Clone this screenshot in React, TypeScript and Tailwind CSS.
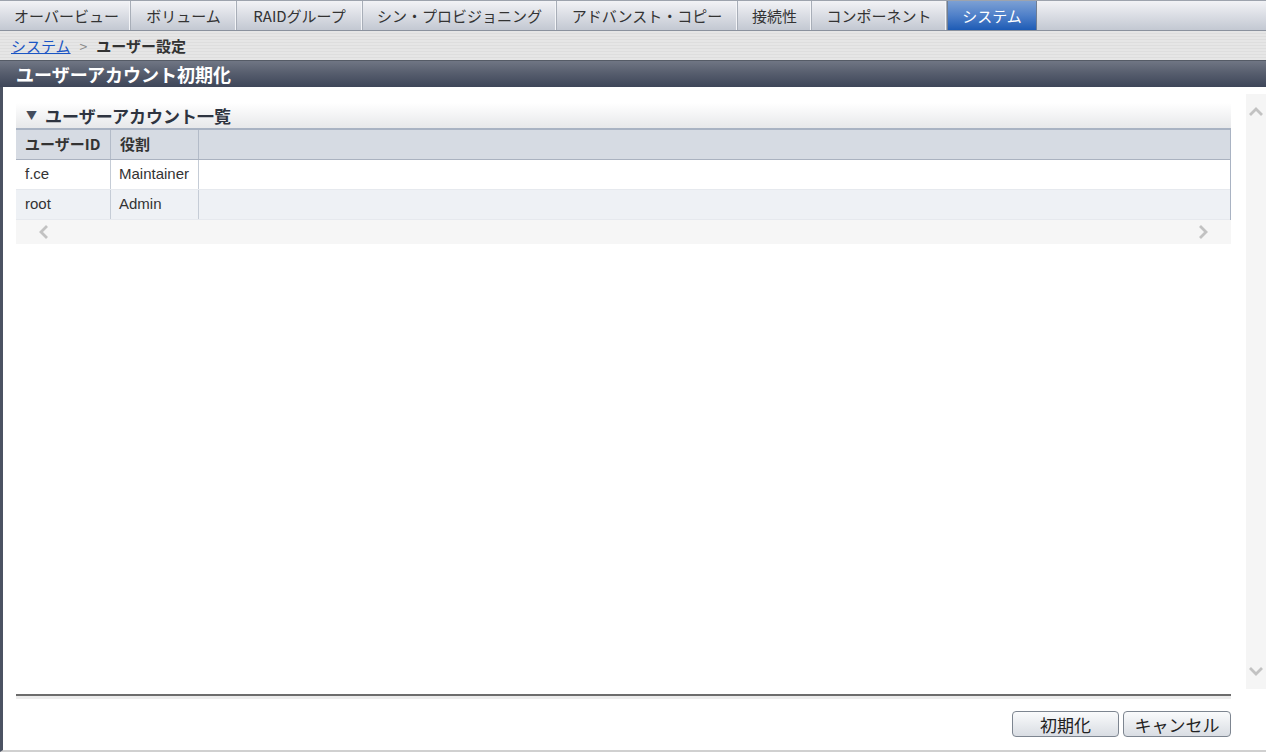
import React from 'react'

const tabs = [
  { label: 'オーバービュー', w: 'w-[128px]' },
  { label: 'ボリューム', w: 'w-[106px]' },
  { label: 'RAIDグループ', w: 'w-[126px]' },
  { label: 'シン・プロビジョニング', w: 'w-[194px]' },
  { label: 'アドバンスト・コピー', w: 'w-[181px]' },
  { label: '接続性', w: 'w-[74px]' },
  { label: 'コンポーネント', w: 'w-[135px]' },
]

const users = [
  { id: 'f.ce', role: 'Maintainer' },
  { id: 'root', role: 'Admin' },
]

const jp = { fontFamily: '"Noto Sans CJK JP", "Liberation Sans", sans-serif' }
const latin = { fontFamily: '"Liberation Sans", "Noto Sans CJK JP", sans-serif' }

function Chevron({ dir }: { dir: 'left' | 'right' | 'up' | 'down' }) {
  const d = {
    left: 'M11 2 L5 8 L11 14',
    right: 'M5 2 L11 8 L5 14',
    up: 'M2 11 L8 5 L14 11',
    down: 'M2 5 L8 11 L14 5',
  }[dir]
  return (
    <svg width="16" height="16" viewBox="0 0 16 16">
      <path d={d} fill="none" stroke="#c2c2c2" strokeWidth="2.8" />
    </svg>
  )
}

export default function App() {
  return (
    <div className="w-[1266px] h-[752px] overflow-hidden bg-white flex flex-col" style={jp}>
      {/* tab bar */}
      <div className="h-[31px] flex pl-[3px] border-t border-[#9da3ad] border-b border-b-[#8b929e] bg-gradient-to-b from-[#f2f3f6] to-[#c3c8d2]">
        {tabs.map((t) => (
          <div
            key={t.label}
            className={`${t.w} h-full flex items-center justify-center border-r border-[#a8aeb8] text-[15px] text-[#333] leading-none shadow-[inset_-1px_0_0_#f4f5f8]`}
          >
            {t.label}
          </div>
        ))}
        <div className="w-[90px] h-full flex items-center justify-center text-[15px] text-white leading-none bg-gradient-to-b from-[#7ca0d4] via-[#4f80c9] to-[#1c5bb5] border-x border-[#6f7d92]">
          システム
        </div>
      </div>

      {/* breadcrumb */}
      <div className="h-[30px] flex items-center gap-[9px] pl-[11px] bg-[repeating-linear-gradient(180deg,#e6e6e6_0px,#e6e6e6_2px,#dedede_2px,#dedede_3px)] border-b border-[#555b66] text-[15px] leading-none">
        <span className="text-[#1a55c4] underline">システム</span>
        <span className="text-[#888] text-[14px]">&gt;</span>
        <span className="font-bold text-[#333]">ユーザー設定</span>
      </div>

      {/* title bar */}
      <div className="h-[26px] flex items-center pl-[16px] bg-gradient-to-b from-[#707684] via-[#555c6c] to-[#3e4659] text-white font-bold text-[18px] leading-none">
        ユーザーアカウント初期化
      </div>

      {/* content */}
      <div className="flex-1 flex border-l-[3px] border-[#4b5262] border-b-2 border-b-[#d0d0d0]">
        <div className="flex-1 flex flex-col pl-[13px] pr-[15px]">
          <div className="h-[16px]" />
          {/* section header */}
          <div className="h-[25px] flex items-center pl-[10px] bg-gradient-to-b from-white to-[#e7e8ea] text-[17px] font-bold text-[#2e3440] leading-none">
            <span className="text-[11px] text-[#444c5c] mr-[8px]">▼</span>
            ユーザーアカウント一覧
          </div>
          <div className="border-t-2 border-[#a9b3c3] border-r border-r-[#a9b3c3]">
            <div className="flex h-[30px] bg-[#d6dbe3] text-[15px] font-bold text-[#333] border-b border-[#aab2c0]">
              <div className="w-[95px] flex items-center pl-[9px] border-r border-[#b3bbc8]">ユーザーID</div>
              <div className="w-[88px] flex items-center pl-[9px] border-r border-[#b3bbc8]">役割</div>
              <div className="flex-1" />
            </div>
            {users.map((u, i) => (
              <div
                key={u.id}
                className={`flex h-[30px] text-[15px] text-[#333] ${i % 2 ? 'bg-[#eef1f5]' : 'bg-white'} border-b border-[#e6e9ee]`}
                style={latin}
              >
                <div className="w-[95px] flex items-center pl-[9px] border-r border-[#c5ccd6]">{u.id}</div>
                <div className="w-[88px] flex items-center pl-[8px] border-r border-[#c5ccd6]">{u.role}</div>
                <div className="flex-1" />
              </div>
            ))}
          </div>
          <div className="h-[24px] flex items-center justify-between px-[20px] bg-[#f6f6f6]">
            <Chevron dir="left" />
            <Chevron dir="right" />
          </div>
          <div className="flex-1" />
          <div className="h-[2px] bg-[#6c6c6c]" />
          <div className="h-[3px] bg-[#ececec]" />
          <div className="flex justify-end gap-[4px] pt-[12px] pb-[13px]">
            <button className="w-[107px] h-[26px] rounded-[4px] border border-[#7d8590] bg-gradient-to-b from-[#fafbfc] to-[#d9dde3] text-[17px] text-[#222] leading-none">
              初期化
            </button>
            <button className="w-[108px] h-[26px] rounded-[4px] border border-[#7d8590] bg-gradient-to-b from-[#fafbfc] to-[#d9dde3] text-[17px] text-[#222] leading-none">
              キャンセル
            </button>
          </div>
        </div>
        <div className="w-[20px] flex flex-col">
          <div className="h-[7px]" />
          <div className="h-[595px] bg-[#f5f5f5] flex flex-col items-center justify-between py-[10px]">
            <Chevron dir="up" />
            <Chevron dir="down" />
          </div>
        </div>
      </div>
    </div>
  )
}
